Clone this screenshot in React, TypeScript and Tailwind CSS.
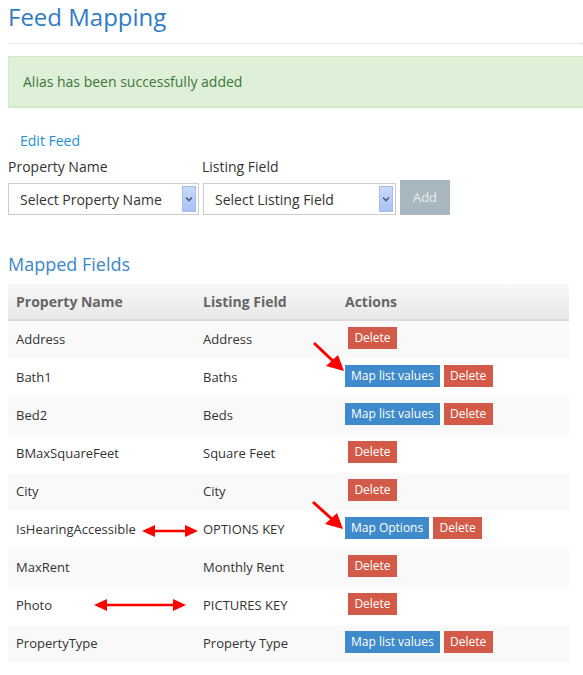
import React from "react";

type Row = {
	prop: string;
	field: string;
	action?: string;
};

const rows: Row[] = [
	{ prop: "Address", field: "Address" },
	{ prop: "Bath1", field: "Baths", action: "Map list values" },
	{ prop: "Bed2", field: "Beds", action: "Map list values" },
	{ prop: "BMaxSquareFeet", field: "Square Feet" },
	{ prop: "City", field: "City" },
	{ prop: "IsHearingAccessible", field: "OPTIONS KEY", action: "Map Options" },
	{ prop: "MaxRent", field: "Monthly Rent" },
	{ prop: "Photo", field: "PICTURES KEY" },
	{ prop: "PropertyType", field: "Property Type", action: "Map list values" },
];

const Select = ({ label, w }: { label: string; w: string }) => (
	<div className={`${w} h-[32px] border border-[#ccc] bg-white flex items-center justify-between pl-[11px] pr-[2px]`}>
		<span className="text-[14px] text-[#333]">{label}</span>
		<span className="w-[14px] h-[26px] bg-gradient-to-b from-[#c9d9fb] to-[#a9c2f5] border border-[#a6bde9] flex items-center justify-center">
			<svg width="8" height="6" viewBox="0 0 8 6">
				<path d="M1 1.5 L4 4.5 L7 1.5" stroke="#4d5a78" strokeWidth="1.6" fill="none" />
			</svg>
		</span>
	</div>
);

export default function App() {
	return (
		<div className="relative w-[583px] h-[675px] bg-white overflow-hidden font-['Open_Sans',sans-serif]">
			<h1 className="pl-[8px] pt-[1px] text-[24px] leading-[32px] text-[#2f7cc4]">Feed Mapping</h1>
			<div className="ml-[8px] mt-[10px] border-t border-dotted border-[#ddd]"></div>
			<div className="ml-[8px] mt-[12px] h-[52px] bg-[#dff0d8] border border-[#d6e9c6] border-r-0 border-b-2 flex items-center pl-[14px] text-[14px] text-[#3c763d]">
				Alias has been successfully added
			</div>

			<div className="pl-[20px] mt-[23px] text-[14px] leading-[20px] text-[#1e8fd6]">Edit Feed</div>
			<div className="flex pl-[8px] mt-[6px] text-[14px] leading-[20px] text-[#333]">
				<span className="w-[194px]">Property Name</span>
				<span>Listing Field</span>
			</div>
			<div className="flex items-start pl-[8px] mt-[3px] gap-[4px]">
				<div className="pt-[3px]">
					<Select label="Select Property Name" w="w-[191px]" />
				</div>
				<div className="pt-[3px]">
					<Select label="Select Listing Field" w="w-[193px]" />
				</div>
				<button className="w-[50px] h-[35px] bg-[#a7b6bf] text-[13px] text-[#e9eef1]">Add</button>
			</div>

			<h2 className="pl-[8px] mt-[37px] text-[18px] leading-[24px] text-[#3a87c8]">Mapped Fields</h2>
			<div className="ml-[8px] mt-[8px] w-[561px] text-[13px] text-[#333]">
				<div className="flex items-center h-[37px] bg-gradient-to-b from-[#f8f8f8] to-[#e8e8e8] border-b-2 border-[#dcdcdc] font-bold text-[14px] text-[#666]">
					<span className="w-[187px] pl-[8px]">Property Name</span>
					<span className="w-[142px] pl-[8px]">Listing Field</span>
					<span className="pl-[8px]">Actions</span>
				</div>
				{rows.map((r, i) => (
					<div key={r.prop} className={`flex items-center h-[38px] ${i % 2 === 0 ? "bg-[#f9f9f9]" : "bg-white"}`}>
						<span className="w-[187px] pl-[8px]">{r.prop}</span>
						<span className="w-[142px] pl-[8px]">{r.field}</span>
						<span className={`flex gap-[4px] ${r.action ? "pl-[8px]" : "pl-[11px]"} pb-[4px]`}>
							{r.action && (
								<button className="h-[22px] px-[6px] bg-[#3f8acb] text-[12px] text-white">{r.action}</button>
							)}
							<button className="h-[22px] w-[49px] bg-[#d35a48] text-[12px] text-white">Delete</button>
						</span>
					</div>
				))}
			</div>

			{/* red annotation arrows on top of the screenshot */}
			<svg className="absolute left-0 top-0 pointer-events-none" width="583" height="675">
				<path d="M314 343 L334 362" stroke="#f00" strokeWidth="3" />
				<path d="M344 371 L326 366 L338 355 Z" fill="#f00" />
				<path d="M313 502 L333 520" stroke="#f00" strokeWidth="3" />
				<path d="M343 529 L325 524 L337 513 Z" fill="#f00" />
				<path d="M152 531 L188 531" stroke="#f00" strokeWidth="2.5" />
				<path d="M142 531 L155 525 L155 537 Z" fill="#f00" />
				<path d="M198 531 L185 525 L185 537 Z" fill="#f00" />
				<path d="M104 605 L176 605" stroke="#f00" strokeWidth="2.5" />
				<path d="M94 605 L107 599 L107 611 Z" fill="#f00" />
				<path d="M186 605 L173 599 L173 611 Z" fill="#f00" />
			</svg>
		</div>
	);
}
